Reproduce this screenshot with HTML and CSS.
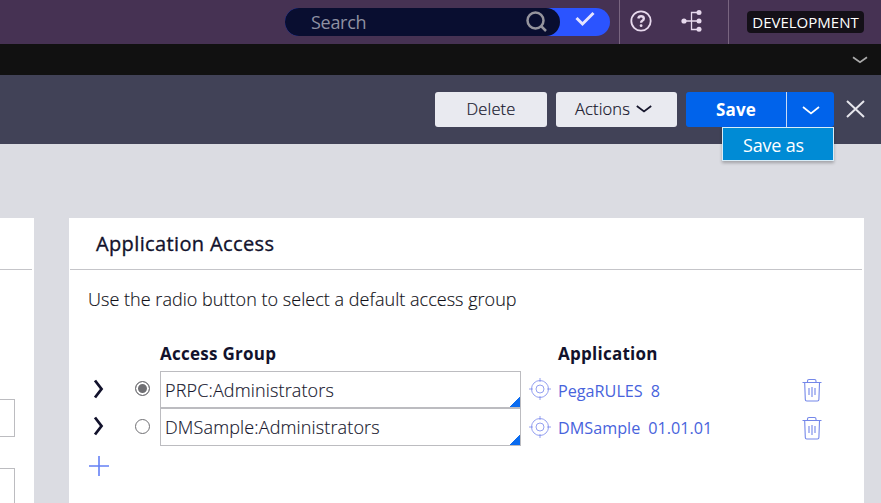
FILE: index.html
```html
<!DOCTYPE html>
<html lang="en">
<head>
<meta charset="utf-8">
<title>Application Access</title>
<link rel="stylesheet" href="styles.css">
</head>
<body>
<svg class="defs" width="0" height="0">
  <symbol id="target" viewBox="0 0 24 24"><circle cx="12" cy="12" r="8.5"/><circle cx="12" cy="12" r="4"/><path d="M12 1v4M12 19v4M1 12h4M19 12h4"/></symbol>
  <symbol id="trash" viewBox="0 0 20 24"><path d="M.5 4.500h19M5.500 4V3q0-1.500 1.500-1.500h5.500q1.500 0 1.500 1.500v1M2.700 5l.6 16.500q0 1.500 1.500 1.500h10.600q1.500 0 1.500-1.500L17.500 5M7 10v7M10 9v10M13 10v7"/></symbol>
  <symbol id="expand" viewBox="0 0 12 20"><path d="M2 1.500l6.500 8.500L2 18.500"/></symbol>
</svg>
<header class="topbar">
  <div class="search-wrap">
    <div class="search"><span class="search-text">Search</span>
      <svg width="22" height="22" viewBox="0 0 22 22"><circle cx="9.500" cy="9.500" r="8"/><path d="M15 15l5 5"/></svg>
    </div>
    <svg class="check" width="20" height="16" viewBox="0 0 20 16"><path d="M1.500 7l6 6L18.500 2"/></svg>
  </div>
  <div class="tools">
    <svg class="help" width="22" height="22" viewBox="0 0 22 22"><circle cx="11" cy="11" r="9.700"/><path class="mark" d="M8.300 8.500q.3-2.300 2.800-2.300t2.700 2.200q0 1.500-1.500 2.300-1.200.7-1.200 2"/><circle class="dot" cx="11.100" cy="15.700" r="1.400"/></svg>
    <svg class="tree" width="22" height="22" viewBox="0 0 22 22"><path d="M3 11h15M18 2.500h-7.500v17H18"/><g class="nodes"><circle cx="3" cy="11" r="2.600"/><circle cx="18" cy="2.600" r="2.500"/><circle cx="18" cy="11" r="2.500"/><circle cx="18" cy="19.300" r="2.500"/></g></svg>
  </div>
  <div class="env"><span class="badge">DEVELOPMENT</span></div>
</header>
<div class="tabs"><svg width="16" height="8" viewBox="0 0 16 8"><path d="M1 1.200l7 5 7-5"/></svg></div>
<div class="actions">
  <button class="btn delete">Delete</button>
  <button class="btn more"><span>Actions</span><svg width="16" height="8" viewBox="0 0 16 8"><path d="M.8 1l7.200 5.500L15.200 1"/></svg></button>
  <div class="split">
    <button class="save">Save</button>
    <button class="drop"><svg width="18" height="9" viewBox="0 0 18 9"><path d="M1 1l8 6.500L17 1"/></svg></button>
    <div class="menu"><span>Save as</span></div>
  </div>
  <svg class="close" width="19" height="18" viewBox="0 0 19 18"><path d="M1 1l17 16M18 1L1 17"/></svg>
</div>
<main class="content">
  <section class="card side">
    <div class="side-head"></div>
    <div class="field"></div>
    <div class="field tall"></div>
  </section>
  <section class="card access">
    <h2>Application Access</h2>
    <p>Use the radio button to select a default access group</p>
    <div class="row labels"><span></span><span></span><b>Access Group</b><span></span><b>Application</b></div>
    <div class="row">
      <svg class="expand"><use href="#expand"/></svg>
      <span class="radio checked"></span>
      <div class="input"><span>PRPC:Administrators</span></div>
      <svg class="target"><use href="#target"/></svg>
      <span class="link"><span>PegaRULES</span><span>8</span></span>
      <svg class="trash"><use href="#trash"/></svg>
    </div>
    <div class="row second">
      <svg class="expand"><use href="#expand"/></svg>
      <span class="radio"></span>
      <div class="input"><span>DMSample:Administrators</span></div>
      <svg class="target"><use href="#target"/></svg>
      <span class="link"><span>DMSample</span><span>01.01.01</span></span>
      <svg class="trash"><use href="#trash"/></svg>
    </div>
    <svg class="add" width="20" height="20" viewBox="0 0 20 20"><path d="M10 0v20M0 10h20"/></svg>
  </section>
</main>
</body>
</html>
```
FILE: styles.css
```css
* { box-sizing: border-box; }
body { margin: 0; width: 881px; height: 503px; overflow: hidden; display: flex; flex-direction: column; background: #dbdce2; color: #12122c; font: 16px/22px "Open Sans", "Noto Sans", sans-serif; }
svg { display: block; flex: none; fill: none; stroke: currentColor; }
.defs { position: absolute; }
span, b { white-space: nowrap; }
button { border: 0; padding: 0; font: inherit; color: inherit; }
.topbar { height: 44px; flex: none; display: flex; background: #463253; padding-left: 285px; }
.search-wrap { width: 325px; height: 28px; margin-top: 8px; border-radius: 14px; background: #2b54ff; display: flex; }
.search { width: 275px; height: 28px; border-radius: 14px; background: #090e30; color: #8f91a2; font-size: 18px; letter-spacing: -.3px; display: flex; align-items: center; padding: 0 12px 0 26px; justify-content: space-between; }
.search svg { stroke: #95949d; stroke-width: 2.500; margin-top: -1px; }
.check { margin: 3px 0 0 15px; stroke: #e5e4ff; stroke-width: 3; }
.tools { margin-left: 9px; width: 110px; display: flex; border: solid #796580; border-width: 0 1px; color: #e7d9ed; padding: 10px 0 0 10px; gap: 29px; }
.help { stroke-width: 1.800; }
.help .mark { stroke-width: 2.400; }
.dot, .nodes { fill: currentColor; stroke: none; }
.tree { stroke-width: 1.300; }
.env { padding: 11px 0 0 18px; }
.badge { display: flex; justify-content: center; align-items: center; width: 117px; height: 22px; border-radius: 4px; background: #141018; color: #fff; font-size: 15px; }
.tabs { height: 31px; flex: none; background: #111; display: flex; justify-content: flex-end; padding: 12px 13px 0 0; color: #aaa; }
.tabs svg { stroke-width: 1.700; }
.actions { height: 69px; flex: none; background: #414257; padding: 17px 0 0 435px; display: flex; }
.btn { height: 35px; border-radius: 3px; background: #e9eaf0; color: #16162c; display: flex; justify-content: center; align-items: center; padding-bottom: 1px; font-weight: 300; font-size: 16.500px; letter-spacing: .15px; -webkit-text-stroke: .2px; }
.delete { width: 112px; }
.more { width: 121px; margin: 0 9px; gap: 6px; padding-right: 6px; }
.more svg { stroke-width: 1.700; }
.split { position: relative; width: 148px; height: 35px; display: flex; color: #fff; }
.save { width: 100px; background: #0063eb; border-radius: 3px 0 0 3px; font-weight: 700; font-size: 17px; letter-spacing: .2px; }
.drop { width: 48px; border-left: 1px solid #c8daf5; background: #0063eb; border-radius: 0 3px 3px 0; display: flex; align-items: center; justify-content: center; }
.drop svg { stroke-width: 1.700; margin-top: 1px; }
.menu { position: absolute; left: 36px; top: 35px; width: 112px; height: 34px; background: #008bd5; border: 1px solid #d8edf8; box-shadow: 0 2px 3px #0004; font-size: 18px; letter-spacing: -.2px; padding: 6px 0 0 20px; }
.close { margin: 8px 0 0 12px; color: #e6e6ec; stroke-width: 2; }
.content { flex: 1; padding-top: 74px; display: flex; gap: 35px; }
.card { background: #fff; height: 285px; }
.side { width: 34px; }
.side-head { height: 52px; width: 32px; border-bottom: 1px solid #c5c5c9; }
.field { width: 15px; height: 38px; margin-top: 129px; border: solid #bcbcc0; border-width: 1px 1px 1px 0; }
.tall { margin-top: 31px; height: 35px; border-bottom: 0; }
.access { width: 795px; }
h2 { margin: 0 2px 0 1px; height: 52px; border-bottom: 1px solid #c5c5c9; font-size: 20px; font-weight: 400; letter-spacing: .37px; -webkit-text-stroke: .35px; line-height: 27px; padding: 12px 0 0 26px; }
p { margin: 0; padding: 18px 0 0 19px; font-size: 18px; font-weight: 300; letter-spacing: .03px; -webkit-text-stroke: .15px; color: #111118; height: 71px; }
.row { display: grid; grid-template-columns: 43px 29px 361px 37px 244px 20px; padding-left: 19px; height: 37px; align-items: center; }
.labels { height: 30px; font-size: 17px; letter-spacing: .26px; align-items: start; padding-top: 2px; }
.expand { width: 12px; height: 20px; margin-left: 5px; stroke-width: 2.800; margin-top: -2px; }
.radio { width: 15px; height: 15px; border: 1px solid #707074; border-radius: 50%; margin: -2px 0 0 4px; }
.checked { background: #707074; box-shadow: inset 0 0 0 2px #fff; }
.input { height: 37px; border: 1px solid #bcbcc0; color: #16162c; font-size: 18px; font-weight: 300; letter-spacing: .14px; -webkit-text-stroke: .15px; padding: 7px 0 0 4px; background: linear-gradient(135deg, transparent 50%, #0b6cf0 51%) right bottom / 11px 11px no-repeat; }
.second .input { height: 38px; }
.target { width: 24px; height: 24px; margin-left: 7px; stroke: #8995ee; stroke-width: .9; margin-top: -1px; }
.link { color: #4863dc; font-size: 16.200px; display: flex; gap: 8px; padding-top: 2px; }
.trash { width: 20px; height: 24px; stroke: #7487e9; stroke-width: 1.100; }
.second .trash { margin-top: 1px; }
.add { margin: 11px 0 0 20px; stroke: #6480f5; stroke-width: 1.600; }
```
